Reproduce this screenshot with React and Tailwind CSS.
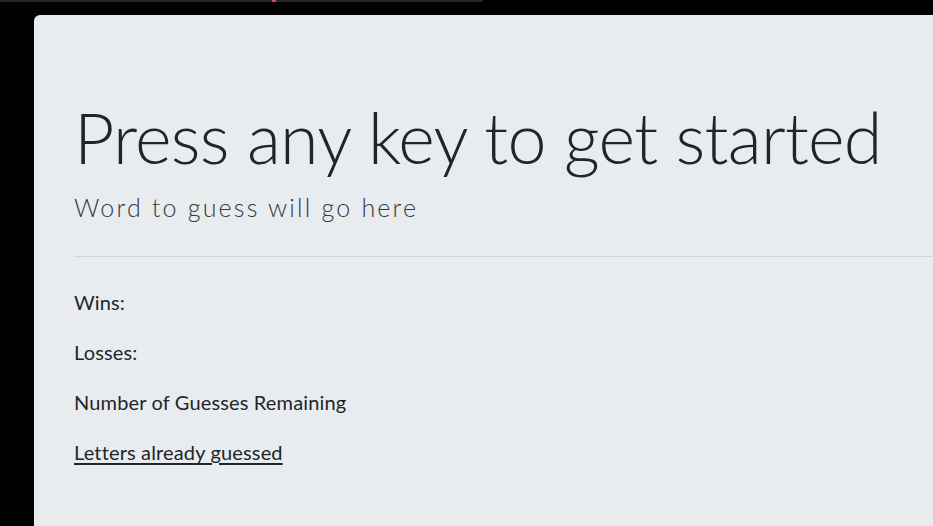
export default function App() {
  const bodyFont = { fontFamily: 'Lato, "Noto Sans", sans-serif' };
  return (
    <div className="min-h-[526px] h-[526px] overflow-hidden bg-black">
      <div className="flex h-[2px]">
        <div className="w-[272px] bg-[#262626]" />
        <div className="w-[4px] bg-[#e0406a]" />
        <div className="w-[207px] bg-[#262626]" />
      </div>
      <div className="pl-[34px] pt-[13px]">
        <div
          className="h-[520px] rounded-tl-[6px] bg-[#e9ecef] pl-[40px] pt-[80px] text-[#212529]"
          style={bodyFont}
        >
          <h1 className="mb-[10px] whitespace-nowrap text-[70px] font-light leading-[84px] tracking-[-0.75px]">
            Press any key to get started
          </h1>
          <p className="whitespace-nowrap text-[25px] font-light leading-[37px] tracking-[2.2px] text-[#343a40]">
            Word to guess will go here
          </p>
          <hr className="my-[30px] border-t border-[#d3d6d9]" />
          <p className="mb-[20px] text-[20px] leading-[30px] tracking-[0.15px]">Wins:</p>
          <p className="mb-[20px] text-[20px] leading-[30px] tracking-[0.15px]">Losses:</p>
          <p className="mb-[20px] text-[20px] leading-[30px] tracking-[0.15px]">Number of Guesses Remaining</p>
          <p className="mb-[20px] text-[20px] leading-[30px] tracking-[0.15px] underline underline-offset-[3px]">
            Letters already guessed
          </p>
        </div>
      </div>
    </div>
  );
}
